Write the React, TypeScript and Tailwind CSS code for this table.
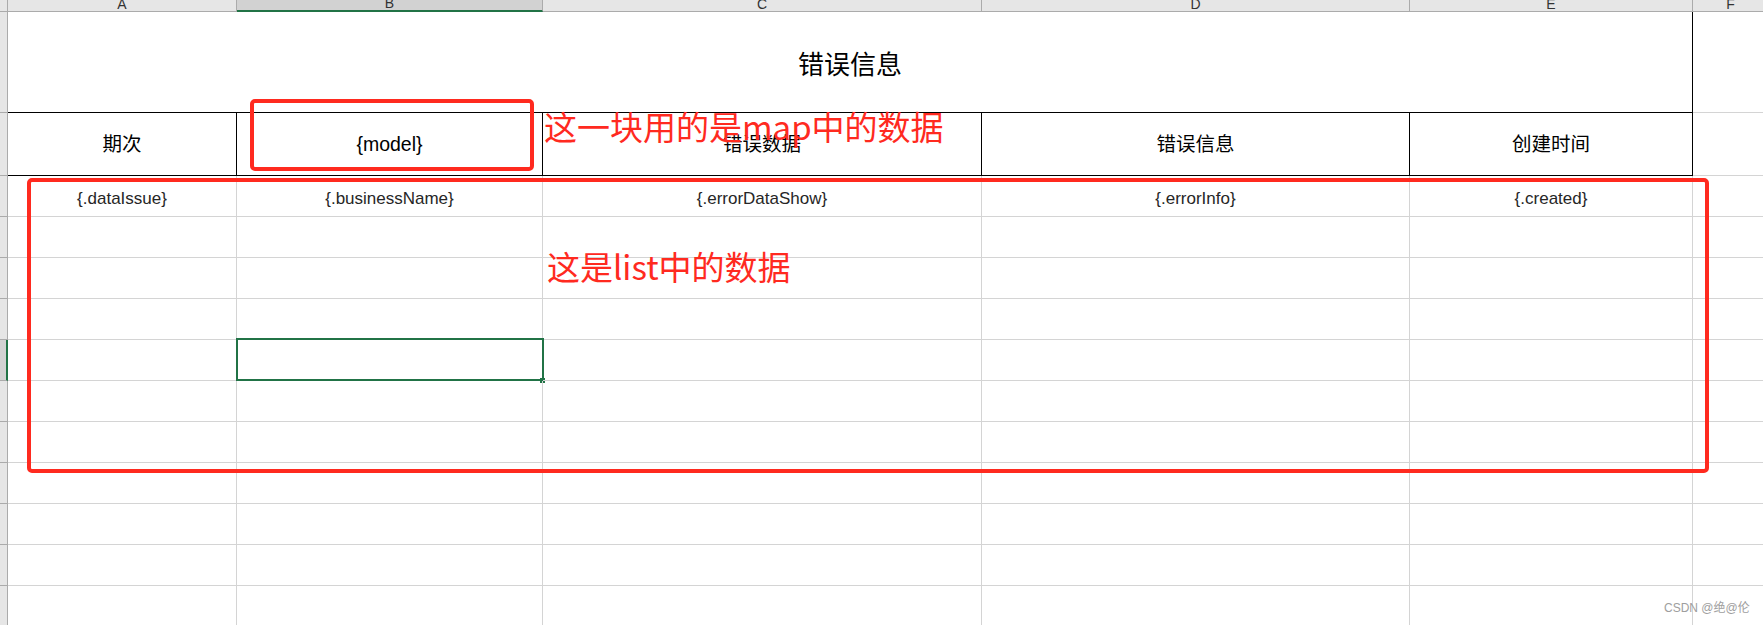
import React from "react";

type Col = { letter: string; w: string };

const COLS: Col[] = [
  { letter: "A", w: "w-[229px]" },
  { letter: "B", w: "w-[306px]" },
  { letter: "C", w: "w-[439px]" },
  { letter: "D", w: "w-[428px]" },
  { letter: "E", w: "w-[283px]" },
  { letter: "F", w: "w-[76px]" },
];

const HEADERS = ["期次", "{model}", "错误数据", "错误信息", "创建时间"];
const FIRST_ROW = ["{.dataIssue}", "{.businessName}", "{.errorDataShow}", "{.errorInfo}", "{.created}"];

const DATA_ROWS = 11;
const SELECTED_ROW = 4;

function RowHead({ selected = false }: { selected?: boolean }) {
  return selected ? (
    <div className="w-[8px] shrink-0 bg-[#d2d2d2] border-r-2 border-r-[#217346] border-b border-b-[#ababab]" />
  ) : (
    <div className="w-[8px] shrink-0 bg-[#e6e6e6] border-r border-b border-[#ababab]" />
  );
}

export default function App() {
  return (
    <div className="relative w-[1763px] h-[625px] overflow-hidden bg-white font-['Liberation_Sans','Noto_Sans_CJK_SC',sans-serif]">
      {/* column letters */}
      <div className="flex h-[12px]">
        <div className="w-[8px] shrink-0 bg-[#e6e6e6] border-r border-b border-[#ababab]" />
        {COLS.map((c) => (
          <div
            key={c.letter}
            className={`${c.w} shrink-0 flex items-end justify-center overflow-hidden border-r border-r-[#ababab] ${
              c.letter === "B"
                ? "bg-[#d2d2d2] border-b-2 border-b-[#217346]"
                : "bg-[#e6e6e6] border-b border-b-[#ababab]"
            }`}
          >
            <span className="text-[14px] leading-[14px] text-[#333]">{c.letter}</span>
          </div>
        ))}
      </div>

      {/* title row */}
      <div className="flex h-[101px]">
        <RowHead />
        <div className="w-[1685px] shrink-0 flex items-center justify-center pt-[6px] border-r border-b border-black text-[26px] text-black">
          错误信息
        </div>
        <div className="w-[76px] shrink-0 border-b border-[#d4d4d4]" />
      </div>

      {/* header row */}
      <div className="flex h-[63px]">
        <RowHead />
        {COLS.slice(0, 5).map((c, i) => (
          <div
            key={c.letter}
            className={`${c.w} shrink-0 flex items-center justify-center pt-[2px] border-r border-b border-black text-[19.5px] text-black`}
          >
            {HEADERS[i]}
          </div>
        ))}
        <div className="w-[76px] shrink-0 border-b border-[#d4d4d4]" />
      </div>

      {/* data rows */}
      {Array.from({ length: DATA_ROWS }).map((_, r) => (
        <div key={r} className="flex h-[41px]">
          <RowHead selected={r === SELECTED_ROW} />
          {COLS.map((c, i) => (
            <div
              key={c.letter}
              className={`${c.w} shrink-0 relative flex items-center justify-center pt-[6px] border-r border-b border-[#d4d4d4] text-[17px] text-[#262626]`}
            >
              {r === 0 && i < 5 ? FIRST_ROW[i] : null}
              {r === SELECTED_ROW && c.letter === "B" ? (
                <div className="absolute -left-[1px] -top-[2px] w-[308px] h-[43px] border-2 border-[#217346]">
                  <div className="absolute left-[302px] top-[38px] w-[5px] h-[5px] bg-[#217346]" />
                </div>
              ) : null}
            </div>
          ))}
        </div>
      ))}

      {/* annotations */}
      <div className="absolute left-[250px] top-[99px] w-[284px] h-[72px] border-4 border-[#ff2a1f] rounded-[5px]" />
      <div className="absolute left-[27px] top-[178px] w-[1682px] h-[295px] border-4 border-[#ff2a1f] rounded-[5px]" />
      <div className="absolute left-[544px] top-[110px] text-[33px] leading-none text-[#ff2a1f] font-['Noto_Sans_CJK_SC',sans-serif] whitespace-nowrap">
        这一块用的是map中的数据
      </div>
      <div className="absolute left-[547px] top-[250px] text-[33px] leading-none text-[#ff2a1f] font-['Noto_Sans_CJK_SC',sans-serif] whitespace-nowrap">
        这是list中的数据
      </div>

      {/* watermark */}
      <div className="absolute left-[1664px] top-[602px] text-[12px] leading-none text-[#9e9e9e] whitespace-nowrap">
        CSDN @绝@伦
      </div>
    </div>
  );
}
